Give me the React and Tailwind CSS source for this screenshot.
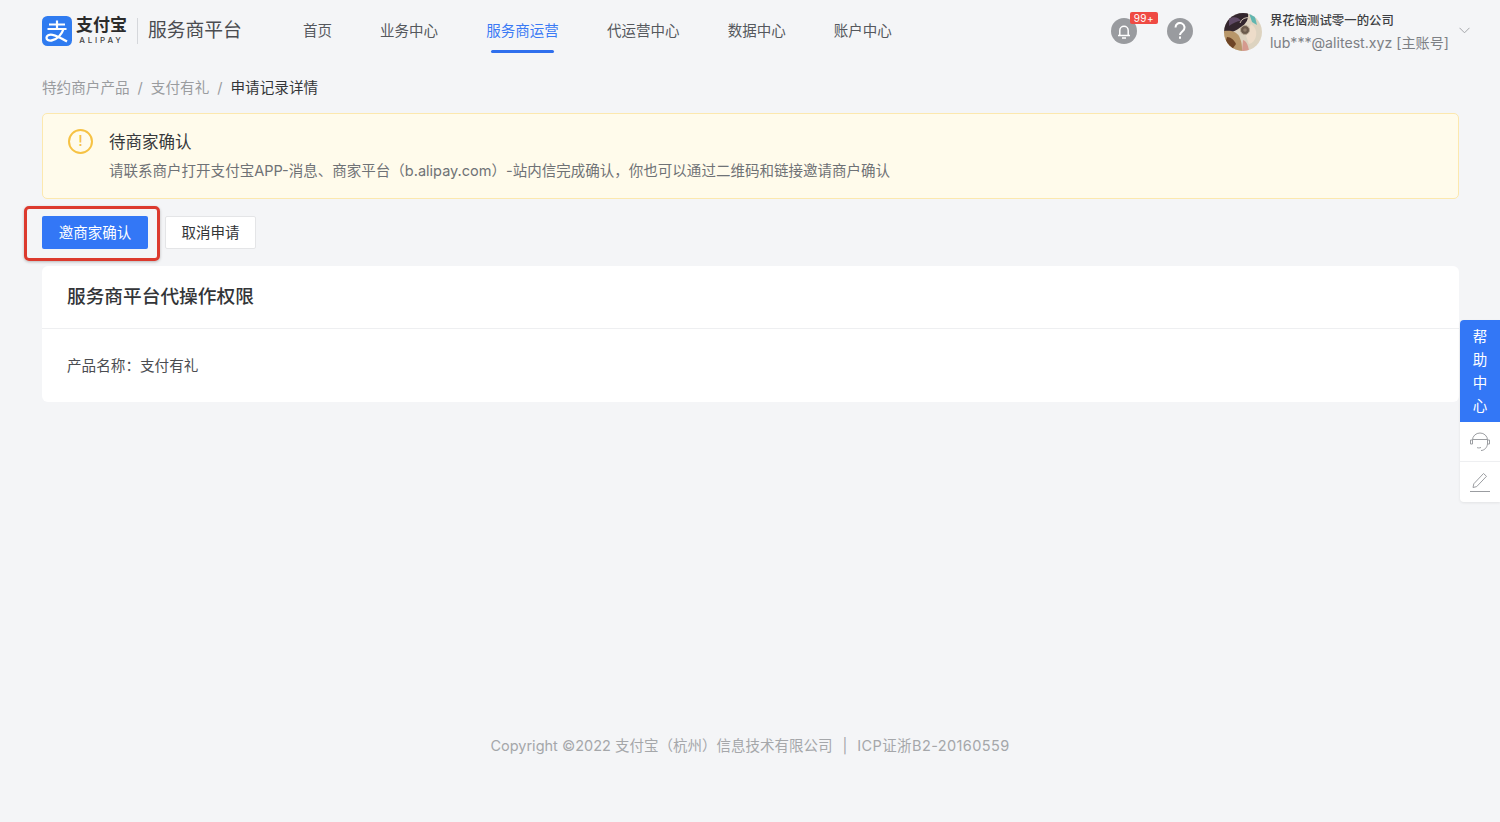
import React from 'react';

const navItems = ['首页', '业务中心', '服务商运营', '代运营中心', '数据中心', '账户中心'];

function AlipayMark() {
  return (
    <svg width="30" height="30" viewBox="0 0 30 30" className="shrink-0">
      <rect width="30" height="30" rx="5.5" fill="#2f7bf0" />
      <path d="M7 8.500h16M15 4.500v8.500M5.500 13h19" fill="none" stroke="#fff" strokeWidth="2.200" />
      <path d="M21.500 13c-1.500 5-6 10.500-12 11.500-3 .5-5-.7-5-2.700 0-2.300 2.500-3.600 6-3 4 .7 9 3.400 14.500 6.700" fill="none" stroke="#fff" strokeWidth="2.300" />
    </svg>
  );
}

function Logo() {
  return (
    <div className="flex items-center">
      <AlipayMark />
      <div className="ml-[4px] flex w-[51px] flex-col items-center leading-none text-[#2b2b2b]">
        <span className="text-[17px] leading-[17px] font-bold">支付宝</span>
        <span className="mt-[2px] text-[8px] leading-[9px] tracking-[2.8px] font-medium text-[#444]">ALIPAY</span>
      </div>
      <div className="mx-[10px] h-[26px] w-px bg-[#d5d7db]" />
      <span className="mt-[1px] text-[18.8px] text-[#4a4c50]">服务商平台</span>
    </div>
  );
}

function Avatar() {
  return (
    <svg width="38" height="38" viewBox="0 0 38 38" className="shrink-0">
      <defs>
        <clipPath id="avatar-clip"><circle cx="19" cy="19" r="19" /></clipPath>
      </defs>
      <g clipPath="url(#avatar-clip)">
        <rect width="38" height="38" fill="#ddd3c0" />
        <path d="M0 0h24c1 6-2 11-7 14-4 3-9 6-17 6z" fill="#33262e" />
        <path d="M0 18c6-1 12 0 15 5 3 6 3 10 3 15H0z" fill="#b8976a" />
        <path d="M3 24c4 0 7 3 9 7l-5 7-7-4z" fill="#6e4526" />
        <path d="M5 6c4-3 10-2 12 2-4 0-8 2-12 5z" fill="#5f4a66" />
        <path d="M25 0h5l3 12-5-3z" fill="#5fb6b0" />
        <path d="M27 11c4 3 6 7 5 12-1 4-3 7-7 8l-3-8z" fill="#eddcc9" />
        <path d="M16 10a8 8 0 0 1 10-5" fill="none" stroke="#cfc4b2" strokeWidth="1" />
        <circle cx="21" cy="17" r="4.500" fill="#6b5a4b" stroke="#b7a994" strokeWidth="1" />
        <circle cx="21" cy="17" r="1.800" fill="#8d7b68" />
        <path d="M19 27c3 1 5 4 6 11h-7z" fill="#d59a8e" />
      </g>
    </svg>
  );
}

function Header() {
  return (
    <header className="flex h-[62px] items-center pl-[42px] pr-[30px]">
      <Logo />
      <nav className="ml-[61px] flex h-full gap-[48.200px]">
        {navItems.map((item) => {
          const active = item === '服务商运营';
          return (
            <div key={item} className="relative flex items-center text-[14.500px] text-[#55585d]">
              <span className={active ? 'text-[#3a7af5]' : ''}>{item}</span>
              {active && <div className="absolute bottom-[9px] left-[5px] right-[5px] h-[3px] rounded-full bg-[#2f6fed]" />}
            </div>
          );
        })}
      </nav>
      <div className="ml-auto flex items-center">
        <div className="relative flex h-[26px] w-[26px] items-center justify-center rounded-full bg-[#999b9f]">
          <svg width="16" height="17" viewBox="0 0 16 17" fill="none" stroke="#fff" strokeWidth="1.500">
            <path d="M2 12.500h12M3.800 12.500V7.500a4.200 4.200 0 0 1 8.400 0v5M6 15h4" />
          </svg>
          <span className="absolute left-[19px] top-[-6px] h-[12px] w-[28px] rounded-[2px] bg-[#ef4a43] text-center text-[10px] leading-[12px] tracking-[0.5px] text-white">99+</span>
        </div>
        <div className="ml-[30px] flex h-[26px] w-[26px] items-center justify-center rounded-full bg-[#999b9f]">
          <svg width="12" height="18" viewBox="0 0 12 18" fill="none" stroke="#fff" strokeWidth="2">
            <path d="M1.500 5.500a4.500 4.500 0 1 1 7.500 3.300c-1.600 1.400-3 2.200-3 4.200" />
            <path d="M6 14.500v2.200" />
          </svg>
        </div>
        <div className="ml-[31px] mt-[1px]"><Avatar /></div>
        <div className="ml-[8px] flex flex-col pt-[3px]">
          <span className="text-[12.400px] leading-[18px] font-medium text-[#3c3e42]">界花恼测试零一的公司</span>
          <span className="mt-[3px] text-[14.150px] leading-[20px] text-[#7d8085]">lub***@alitest.xyz [主账号]</span>
        </div>
        <svg width="11" height="7" viewBox="0 0 11 7" fill="none" stroke="#a3a5a9" className="mb-[2px] ml-[10px]">
          <path d="M.5.8l5 5 5-5" />
        </svg>
      </div>
    </header>
  );
}

function Breadcrumb() {
  return (
    <div className="mt-[17px] flex h-[20px] items-center text-[14.600px] text-[#9a9c9f]">
      <span>特约商户产品</span>
      <span className="mx-[8px]">/</span>
      <span>支付有礼</span>
      <span className="mx-[8px]">/</span>
      <span className="text-[#333538]">申请记录详情</span>
    </div>
  );
}

function Notice() {
  return (
    <div className="mt-[14px] flex h-[86px] rounded-[5px] border-[1.500px] border-[#fce8ae] bg-[#fffbeb] pl-[25px]">
      <div className="mt-[15px] flex h-[25px] w-[25px] items-center justify-center rounded-full border-2 border-[#f6c244] text-[15px] font-medium text-[#f6c244]">!</div>
      <div className="ml-[16px]">
        <div className="mt-[16px] text-[16.500px] leading-[24px] text-[#37393c]">待商家确认</div>
        <div className="mt-[6px] text-[14.520px] leading-[22px] text-[#6f7276]">
          请联系商户打开支付宝APP-消息、商家平台（b.alipay.com）-站内信完成确认，你也可以通过二维码和链接邀请商户确认
        </div>
      </div>
    </div>
  );
}

function Actions() {
  return (
    <div className="mt-[17px] flex h-[33px] items-center">
      <div className="relative">
        <button className="h-[33px] w-[106px] rounded-[2px] bg-[#3377f6] text-[14.500px] text-white">邀商家确认</button>
        <div className="absolute left-[-18px] top-[-10px] h-[55px] w-[136px] rounded-[5px] border-[3px] border-[#dc3a2e] shadow-[0_1px_3px_rgba(0,0,0,0.25)]" />
      </div>
      <button className="ml-[17px] h-[33px] w-[91px] rounded-[2px] border border-[#e4e5e7] bg-white text-[14.500px] text-[#333538]">取消申请</button>
    </div>
  );
}

function PermissionCard() {
  return (
    <div className="mt-[17px] h-[136px] rounded-[6px] bg-white">
      <div className="flex h-[63px] items-center border-b border-[#eeeff1] pl-[25px] text-[18.700px] font-medium text-[#333538]">服务商平台代操作权限</div>
      <div className="flex h-[73px] items-center pl-[25px] pt-[2px] text-[14.600px] text-[#4b4d51]">产品名称：支付有礼</div>
    </div>
  );
}

function HelpRail() {
  return (
    <aside className="fixed right-0 top-[320px] w-[40px] overflow-hidden rounded-l-[4px] bg-white shadow-[0_1px_3px_rgba(0,0,0,0.08)]">
      <div className="flex h-[102px] flex-col items-center justify-center bg-[#3377f6] text-[14.500px] leading-[23px] text-white">
        <span>帮</span>
        <span>助</span>
        <span>中</span>
        <span>心</span>
      </div>
      <div className="flex h-[40px] items-center justify-center border-b border-[#eeeff1]">
        <svg width="22" height="20" viewBox="0 0 22 20" fill="none" stroke="#9b9da1" strokeWidth="1">
          <path d="M3.500 8a7.500 7 0 0 1 15 0M3.500 7.500h15M1.500 8h2v4h-2zM18.500 8h2v4h-2zM18.500 12c-.5 4-3.500 6.500-6.500 6.500M8 15.500c1 .6 2.500.6 4 0" />
        </svg>
      </div>
      <div className="flex h-[40px] items-center justify-center">
        <svg width="22" height="22" viewBox="0 0 22 22" fill="none" stroke="#9b9da1" strokeWidth="1">
          <path d="M1 20.500h20M4 16.500l.8-3.700L14.500 2.500l3 2.800L7.700 15.600z" />
        </svg>
      </div>
    </aside>
  );
}

export default function App() {
  return (
    <div className="flex min-h-[822px] flex-col bg-[#f4f5f7] font-['Inter','Noto_Sans_CJK_SC',sans-serif]">
      <Header />
      <main className="pl-[42px] pr-[41px]">
        <Breadcrumb />
        <Notice />
        <Actions />
        <PermissionCard />
      </main>
      <footer className="mt-[333px] flex justify-center text-[14.500px] leading-[22px] text-[#a5a7aa]">
        <span>Copyright ©2022 支付宝（杭州）信息技术有限公司</span>
        <span className="mx-[10px]">|</span>
        <span className="tracking-[0.400px]">ICP证浙B2-20160559</span>
      </footer>
      <HelpRail />
    </div>
  );
}
